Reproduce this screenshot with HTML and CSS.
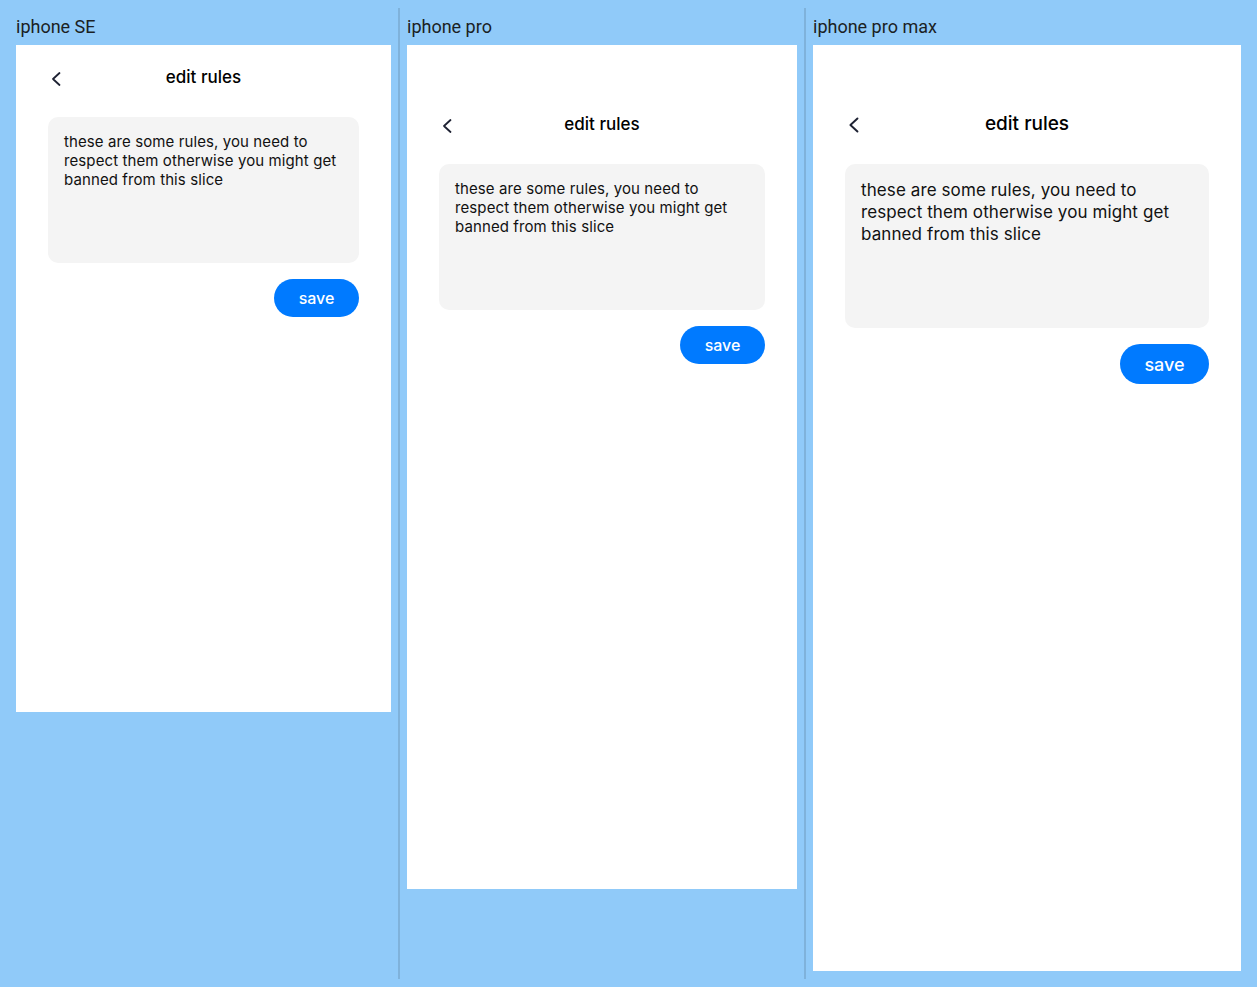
FILE: index.html
```html
<!DOCTYPE html>
<html lang="en">
<head>
<meta charset="utf-8">
<title>edit rules</title>
<link rel="stylesheet" href="styles.css">
</head>
<body>
<div class="board">
  <section class="device">
    <div class="device-label">iphone SE</div>
    <div class="frame frame--se">
      <header class="topbar">
        <svg class="back" viewBox="0 0 24 24" width="24" height="24"><path d="M11.5 6 L5 12 L11.5 18" fill="none" stroke="currentColor" stroke-width="1.8" stroke-linecap="round" stroke-linejoin="round"/></svg>
        <h1 class="title">edit rules</h1>
      </header>
      <div class="rules">these are some rules, you need to respect them otherwise you might get banned from this slice</div>
      <div class="actions"><button class="save">save</button></div>
    </div>
  </section>
  <section class="device">
    <div class="device-label">iphone pro</div>
    <div class="frame frame--pro">
      <header class="topbar">
        <svg class="back" viewBox="0 0 24 24" width="24" height="24"><path d="M11.5 6 L5 12 L11.5 18" fill="none" stroke="currentColor" stroke-width="1.8" stroke-linecap="round" stroke-linejoin="round"/></svg>
        <h1 class="title">edit rules</h1>
      </header>
      <div class="rules">these are some rules, you need to respect them otherwise you might get banned from this slice</div>
      <div class="actions"><button class="save">save</button></div>
    </div>
  </section>
  <section class="device">
    <div class="device-label">iphone pro max</div>
    <div class="frame frame--max">
      <header class="topbar">
        <svg class="back" viewBox="0 0 24 24" width="26" height="26"><path d="M11.5 6 L5 12 L11.5 18" fill="none" stroke="currentColor" stroke-width="1.8" stroke-linecap="round" stroke-linejoin="round"/></svg>
        <h1 class="title">edit rules</h1>
      </header>
      <div class="rules">these are some rules, you need to respect them otherwise you might get banned from this slice</div>
      <div class="actions"><button class="save">save</button></div>
    </div>
  </section>
</div>
</body>
</html>
```
FILE: styles.css
```css
html, body {
  margin: 0;
  padding: 0;
  background: #90caf9;
}
body {
  padding: 8px;
  font-family: Roboto, "Liberation Sans", sans-serif;
}
.board {
  display: flex;
  align-items: stretch;
  padding: 0 1px;
}
.device {
  padding: 8px 7px;
  display: flex;
  flex-direction: column;
  align-items: flex-start;
}
.device + .device {
  border-left: 2px solid #7fb2db;
}
.device-label {
  font-size: 18px;
  line-height: 21px;
  color: #1b1f24;
  margin-bottom: 8px;
}
.frame {
  background: #ffffff;
  box-sizing: border-box;
  padding: 20px 32px 0;
  font-family: Inter, "Noto Sans", sans-serif;
  color: #111111;
}
.frame--se { width: 375px; height: 667px; }
.frame--pro { width: 390px; height: 844px; padding-top: 67px; }
.frame--max { width: 428px; height: 926px; padding-top: 67px; }

.topbar {
  position: relative;
  height: 24px;
  display: flex;
  align-items: center;
  justify-content: center;
  margin-bottom: 28px;
}
.back {
  position: absolute;
  left: 0;
  top: 2px;
  color: #1e2233;
}
.frame--max .back { top: 0; }
.title {
  margin: 0;
  font-size: 17px;
  font-weight: 500;
  color: #000;
  line-height: 24px;
}
.rules {
  background: #f4f4f4;
  border-radius: 10px;
  height: 146px;
  box-sizing: border-box;
  padding: 15px 16px;
  font-size: 15px;
  letter-spacing: 0.1px;
  line-height: 19px;
  color: #111;
}
.actions {
  display: flex;
  justify-content: flex-end;
  margin-top: 16px;
}
.save {
  border: none;
  background: #007aff;
  color: #fff;
  font-family: Inter, "Noto Sans", sans-serif;
  font-size: 16px;
  font-weight: 500;
  height: 38px;
  width: 85px;
  border-radius: 19px;
  padding: 0;
}
.frame--max .title { font-size: 19px; }
.frame--max .rules { height: 164px; font-size: 17px; line-height: 22px; padding-top: 15px; }
.frame--max .save { width: 89px; height: 40px; border-radius: 20px; font-size: 18px; }
```
